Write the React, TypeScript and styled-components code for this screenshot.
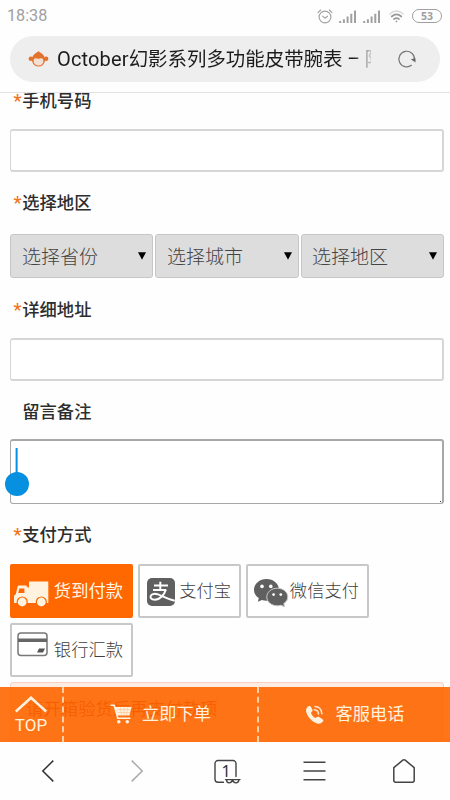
import React from 'react';
import styled, { createGlobalStyle, css } from 'styled-components';

const GlobalStyle = createGlobalStyle`
  * { box-sizing: border-box; }
  body { margin: 0; background: #fefefe; }
  svg { display: block; flex: none; overflow: visible; }
`;

const Screen = styled.div`
  width: 450px;
  height: 800px;
  display: flex;
  flex-direction: column;
  overflow: hidden;
  background: #fefefe;
  color: #333;
  font-family: Roboto, 'Noto Sans CJK SC', sans-serif;
`;

const StatusBar = styled.div`
  height: 36px;
  padding: 0 8px 4px 7px;
  display: flex;
  align-items: center;
  justify-content: space-between;
  color: #a0a0a0;
`;

const Clock = styled.span`
  font-size: 16.2px;
  line-height: 34px;
`;

const StatusIcons = styled.div`
  display: flex;
  align-items: center;
`;

const Address = styled.div`
  height: 46px;
  flex: none;
  margin: 0 10px 10px;
  padding: 0 24px 0 18px;
  border-radius: 23px;
  background: #eee;
  display: flex;
  align-items: center;
`;

const Title = styled.div`
  width: 314px;
  margin-left: 8px;
  margin-right: auto;
  overflow: hidden;
  white-space: nowrap;
  font-size: 19.45px;
  line-height: 48px;
  color: #1c1c1c;
  -webkit-mask-image: linear-gradient(90deg, #000 296px, transparent 318px);
  mask-image: linear-gradient(90deg, #000 296px, transparent 318px);
`;

const Latin = styled.span`
  font-size: 20px;
  letter-spacing: 0.15px;
`;

const Page = styled.main`
  position: relative;
  height: 650px;
  flex: none;
  overflow: hidden;
  border-top: 1px solid #e2e2e2;
`;

const Form = styled.form`
  display: flex;
  flex-direction: column;
  margin: -2px 6px 0 10px;
`;

const Field = styled.div<{ $gap: number; $after?: number }>`
  display: flex;
  flex-direction: column;
  gap: ${(p) => p.$gap}px;
  margin-bottom: ${(p) => p.$after ?? 21}px;
`;

const Label = styled.label`
  height: 20px;
  padding-left: 3.5px;
  display: flex;
  font-size: 17.3px;
  font-weight: 500;
  line-height: 21px;
  color: #2d2d2d;
`;

const Mark = styled.span`
  width: 8.8px;
  font-size: 18px;
  line-height: 20px;
  color: #ee7420;
`;

const Input = styled.input`
  width: 100%;
  height: 43px;
  padding: 0 10px;
  border: 2px solid #d6d6d6;
  border-width: 2px 2px 2px 1px;
  border-radius: 3px;
  background: #fff;
  outline: none;
`;

const NoteBox = styled.div`
  position: relative;
  height: 65px;
`;

const Note = styled.textarea`
  display: block;
  width: 100%;
  height: 65px;
  border: 1px solid #a8a8a8;
  border-width: 2px 2px 1px 1px;
  border-radius: 3px;
  background: #fff;
  resize: none;
  outline: none;
`;

const CaretHandle = styled.svg`
  position: absolute;
  left: -5px;
  top: 9px;
`;

const GripDot = styled.i`
  position: absolute;
  right: 3px;
  bottom: 2px;
  width: 1px;
  height: 1px;
  background: #333;
`;

const SelectRow = styled.div`
  display: grid;
  grid-template-columns: 143px 144px 143px;
  justify-content: space-between;
`;

const Select = styled.button`
  height: 44px;
  padding: 4px 6px 0 11px;
  display: flex;
  align-items: center;
  justify-content: space-between;
  border: 1px solid #c6c6c6;
  border-radius: 3px;
  background: #ddd;
  font: 300 19px/42px Roboto, 'Noto Sans CJK SC', sans-serif;
  color: #444;

  &:nth-child(3) { padding-left: 10px; }

  svg { margin-top: -4px; }
`;

const Payments = styled.div`
  display: flex;
  flex-wrap: wrap;
  gap: 5px;
`;

const payActive = css`
  border-color: #ff6700;
  background: #ff6700;
  color: #fff6e6;
  font-weight: 400;
`;

const PayOption = styled.button<{ $width: number; $active?: boolean }>`
  width: ${(p) => p.$width}px;
  height: 54px;
  padding: 0 8px 1px 0;
  display: flex;
  align-items: center;
  border: 2px solid #c8c8c8;
  border-radius: 2px;
  background: #fff;
  font: 300 17.3px/48px Roboto, 'Noto Sans CJK SC', sans-serif;
  color: #404040;
  white-space: nowrap;
  ${(p) => p.$active && payActive}

  span { margin-left: auto; }
`;

const Notice = styled.div`
  height: 60px;
  margin-top: 5px;
  padding-left: 15px;
  border: 1px solid #f8cfc0;
  border-radius: 3px;
  background: #fdece4;
  font-size: 17.4px;
  line-height: 53px;
  color: #a03010;
`;

const ActionBar = styled.div`
  position: absolute;
  inset: auto 0 0 0;
  height: 55px;
  display: grid;
  grid-template-columns: 62px 195px 193px;
  background: rgba(255, 102, 0, 0.9);
  color: #fff2df;
`;

const Action = styled.button<{ $gap?: number; $stack?: boolean }>`
  padding: 0;
  display: flex;
  flex-direction: ${(p) => (p.$stack ? 'column' : 'row')};
  align-items: center;
  justify-content: center;
  gap: ${(p) => p.$gap ?? 0}px;
  border: 0;
  background: none;
  font: 400 17.2px/20px Roboto, 'Noto Sans CJK SC', sans-serif;
  color: inherit;

  & + & {
    border-left: 2px dashed #ffd0a6;
    padding: 0 0 1px 1px;
  }
`;

const TopText = styled.span`
  font-size: 17px;
  line-height: 18px;
`;

const BrowserNav = styled.nav`
  height: 58px;
  flex: none;
  padding: 0 2px 0 4px;
  display: grid;
  grid-template-columns: repeat(5, 1fr);
  align-items: center;
  justify-items: center;
`;

const line = { fill: 'none', strokeLinecap: 'round', strokeLinejoin: 'round' } as const;

const AlarmIcon = () => (
  <svg width="16" height="15" viewBox="0 0 16 15" stroke="#a0a0a0" strokeWidth="1.1" {...line}>
    <circle cx="8" cy="8" r="5.9" />
    <path d="M5.6 7.1 8 9.2l2.5-2M1 3.6 3.7 1M15 3.6 12.3 1" />
  </svg>
);

const SignalIcon = () => (
  <svg width="18" height="13" viewBox="0 0 18 13" stroke="#a0a0a0" strokeWidth="2" fill="none">
    <path d="M1.2 13v-2M4.9 13V9.2M8.6 13V6.6M12.3 13V3.8M16 13V.5" />
  </svg>
);

const WifiIcon = () => (
  <svg width="15" height="13" viewBox="0 0 15 13" strokeWidth="1.7" stroke="#999" {...line}>
    <path d="M.8 4Q7.5-2 14.2 4" stroke="#d8d8d8" strokeWidth="1.2" />
    <path d="M2.7 6.5Q7.5 2.4 12.3 6.5M4.9 9.1q2.6-2 5.2 0" />
    <circle cx="7.5" cy="11.4" r=".9" fill="#999" stroke="none" />
  </svg>
);

const Battery = styled.span`
  width: 30px;
  height: 14px;
  border: 1px solid #a0a0a0;
  border-radius: 7px;
  font: 700 10.5px/12px 'Open Sans', sans-serif;
  text-align: center;
`;

const Spacer = styled.i<{ $w: number }>`
  width: ${(p) => p.$w}px;
`;

const MonkeyIcon = () => (
  <svg width="21" height="16" viewBox="0 0 21 16" fill="#e2722c">
    <path d="M10.5 0C12 2 15 2.200 16.500 6L17 10C16 13.800 13.800 15.600 10.500 15.600S5 13.800 4 10L4.500 6C6 2.200 9 2 10.500 0Z" />
    <circle cx="2.900" cy="7.800" r="2.300" />
    <circle cx="18.100" cy="7.800" r="2.300" />
    <path
      d="M5.600 9.800c0-1.900 1.300-2.700 2.600-2.500 1 .1 1.600.6 2.300.6s1.300-.5 2.300-.6c1.300-.2 2.600.6 2.600 2.500 0 3-1.900 4.800-4.900 4.800s-4.900-1.800-4.900-4.800Z"
      fill="#f3e0d4"
    />
  </svg>
);

const ReloadIcon = () => (
  <svg width="18" height="18" viewBox="0 0 18 18">
    <path d="M13.400 15.300A7.800 7.800 0 1 1 16.500 9.500" stroke="#777" strokeWidth="1.200" {...line} />
    <path d="m12.800 9.200 4.700-1v4.300Z" fill="#666" />
  </svg>
);

const DownTriangle = () => (
  <svg width="8" height="8" viewBox="0 0 8 8">
    <path d="M0 .2h8L4 7.800Z" fill="#000" />
  </svg>
);

const PayIcon = styled.svg<{ $x: number; $y?: number }>`
  margin-left: ${(p) => p.$x}px;
  margin-top: ${(p) => p.$y ?? 0}px;
`;

const TruckIcon = () => (
  <PayIcon $x={2} $y={6} width="35" height="26" viewBox="0 0 35 26" fill="#fff3e0">
    <path d="M15 .5h19.300V22H13V6.500h2Z" />
    <path d="M5 4.500h6.500c.8 0 1.200.4 1.200 1.200h1V22H0v-7.200l1.800-1.600 1.700-7.300c.2-.8.7-1.400 1.500-1.400Z" />
    <path d="M5.400 7.600h5v4.500H4.200Z" fill="#ff6700" />
    <g stroke="#ff6700" strokeWidth="1.200">
      <circle cx="8.200" cy="21" r="5" />
      <circle cx="27.300" cy="21" r="5" />
    </g>
  </PayIcon>
);

const AlipayIcon = () => (
  <PayIcon $x={7} $y={2} width="28" height="28" viewBox="0 0 28 28">
    <rect width="28" height="28" rx="5" fill="#606060" />
    <g stroke="#fff" fill="none" strokeWidth="2">
      <path d="M7 7.500h14M6 12h13M13.300 3.800V12" />
      <path d="M19 11.500c-1.600 5-6 10.200-11.300 10.200-3.200 0-4.700-1.700-4-3.700.8-2.200 4.200-2.700 7.300-1.600 5 1.700 9.200 4.900 16.800 6.400" />
    </g>
  </PayIcon>
);

const WechatIcon = () => (
  <PayIcon $x={6} $y={4} width="34" height="28" viewBox="0 0 34 28">
    <path
      d="M12.500 0C19.400 0 25 4.800 25 10.900s-5.600 10.900-12.500 10.900c-1.700 0-3.200-.2-4.600-.7L4 22.700l.7-3.600C1.800 17 0 14.200 0 10.900 0 4.800 5.600 0 12.500 0Z"
      fill="#606060"
    />
    <path
      d="M23.300 9.200c-5.900 0-10.500 3.900-10.500 8.800s4.600 8.800 10.500 8.800c1.300 0 2.500-.2 3.600-.6l3.600 1.600-.7-3.300c2.500-1.600 4-3.900 4-6.500 0-4.900-4.600-8.800-10.500-8.800Z"
      fill="#606060"
      stroke="#ccc"
      strokeWidth="1"
    />
    <g fill="#fff">
      <circle cx="8" cy="7.400" r="1.800" />
      <circle cx="16.800" cy="7.400" r="1.800" />
      <circle cx="19.600" cy="15.600" r="1.400" />
      <circle cx="26.800" cy="15.600" r="1.400" />
    </g>
  </PayIcon>
);

const CardIcon = () => (
  <PayIcon $x={5} $y={-10} width="31" height="25" viewBox="0 0 31 25">
    <rect x="1" y="1" width="29" height="22.500" rx="3" fill="none" stroke="#777" strokeWidth="1.500" />
    <path d="M1 6.500h29v3.500H1Z" fill="#666" />
    <path d="M22 16.500h6l-2 4h-6Z" fill="#555" />
  </PayIcon>
);

const ChevronUp = () => (
  <svg width="32" height="16" viewBox="0 0 32 16" fill="none" stroke="#fff2df" strokeWidth="2.500">
    <path d="M.8 15.500 16 1.700l15.200 13.800" />
  </svg>
);

const CartIcon = () => (
  <svg width="21" height="20" viewBox="0 0 21 20">
    <path d="M0 1.200h3.200l3.600 13h12" stroke="#fff2df" strokeWidth="1.600" {...line} />
    <path d="M3.900 2.900H20.600l-2.200 8.600H6.300Z" fill="#fff2df" />
    <path d="M6 5.600h13.500M6.500 8.500h12.200M9.500 3.500l1 7.500M13 3.500v7.500M16.700 3.500l-1 7.500" stroke="#ffb780" strokeWidth=".5" />
    <circle cx="7.800" cy="17.700" r="1.800" fill="#fff2df" />
    <circle cx="16.300" cy="17.700" r="1.800" fill="#fff2df" />
  </svg>
);

const PhoneIcon = () => (
  <svg width="18" height="19" viewBox="0 0 18 19">
    <path
      d="M1.800 1.600C3 .5 4.200.7 5 2l1.300 2.400c.6 1.200.2 2.100-1.200 3-.2 1.800 2.600 5 4.600 5.500 1.300-1.300 2.400-1.500 3.500-.8l3 1.800c1.300.8 1.500 1.900.5 2.900-1.800 2-4.300 2.500-7.300 1C5.500 16 1.500 11.500.3 7.300-.3 4.800.2 3 1.800 1.600Z"
      fill="#fff2df"
    />
    <path d="M8.300 4.700c2.500.1 4 1.600 4.200 4.300M9 1.500c4.200.2 6.500 2.600 6.900 7.200" stroke="#ffe5cb" strokeWidth="1.600" {...line} />
  </svg>
);

const BackIcon = ({ color, flip }: { color: string; flip?: boolean }) => (
  <svg width="12" height="22" viewBox="0 0 12 22" stroke={color} strokeWidth="1.500" fill="none">
    <path d={flip ? 'M.7.600 11.200 11 .7 21.400' : 'M11.300.600.8 11l10.500 10.400'} />
  </svg>
);

const TabsButton = styled.span`
  position: relative;
  width: 23px;
  height: 23px;
  font: 400 16px/23px 'Noto Sans', sans-serif;
  text-align: center;
  color: #333;

  svg { position: absolute; left: 0; top: 0; }
`;

const TabsIcon = () => (
  <svg width="26" height="25" viewBox="0 0 26 25" stroke="#444" strokeWidth="1.400" {...line}>
    <path d="M9.500 22.300H4A3 3 0 0 1 1 19.300V3.500a3 3 0 0 1 3-3h15a3 3 0 0 1 3 3v13" />
    <path d="M11.500 19.600h14.500" />
    <path d="M12.500 20c.1 3.600 4.700 4 6-.2 1.300 4.200 6.200 3.800 6.300.2" />
  </svg>
);

const MenuIcon = () => (
  <svg width="23" height="20" viewBox="0 0 23 20" stroke="#444" strokeWidth="1.500">
    <path d="M.5 1.200h22M.5 10h22M.5 18.800h22" />
  </svg>
);

const HomeIcon = () => (
  <svg width="22" height="24" viewBox="0 0 22 24" stroke="#444" strokeWidth="1.500" {...line}>
    <path d="m.8 8.700 9-7.500q1.200-1 2.400 0l9 7.500v12.500a2 2 0 0 1-2 2H2.800a2 2 0 0 1-2-2Z" />
  </svg>
);

const regions = ['选择省份', '选择城市', '选择地区'];

const payments = [
  { name: '货到付款', width: 123, icon: <TruckIcon />, active: true },
  { name: '支付宝', width: 103, icon: <AlipayIcon /> },
  { name: '微信支付', width: 123, icon: <WechatIcon /> },
  { name: '银行汇款', width: 123, icon: <CardIcon /> },
];

const FieldLabel = ({ text, required = true }: { text: string; required?: boolean }) => (
  <Label>
    <Mark>{required ? '*' : ''}</Mark>
    {text}
  </Label>
);

export default function App() {
  return (
    <>
      <GlobalStyle />
      <Screen>
        <StatusBar>
          <Clock>18:38</Clock>
          <StatusIcons>
            <AlarmIcon />
            <Spacer $w={6} />
            <SignalIcon />
            <Spacer $w={6} />
            <SignalIcon />
            <Spacer $w={8} />
            <WifiIcon />
            <Spacer $w={8} />
            <Battery>53</Battery>
          </StatusIcons>
        </StatusBar>
        <Address>
          <MonkeyIcon />
          <Title>
            <Latin>October</Latin>幻影系列多功能皮带腕表 – 陌
          </Title>
          <ReloadIcon />
        </Address>
        <Page>
          <Form>
            <Field $gap={18}>
              <FieldLabel text="手机号码" />
              <Input />
            </Field>
            <Field $gap={21} $after={22}>
              <FieldLabel text="选择地区" />
              <SelectRow>
                {regions.map((name) => (
                  <Select key={name} type="button">
                    {name}
                    <DownTriangle />
                  </Select>
                ))}
              </SelectRow>
            </Field>
            <Field $gap={18}>
              <FieldLabel text="详细地址" />
              <Input />
            </Field>
            <Field $gap={17}>
              <FieldLabel text="留言备注" required={false} />
              <NoteBox>
                <Note />
                <GripDot />
                <CaretHandle width="24" height="48" viewBox="0 0 24 48" fill="#0790df">
                  <path d="M10.600 0h2v26h-2Z" />
                  <circle cx="12" cy="36" r="12" />
                </CaretHandle>
              </NoteBox>
            </Field>
            <Field $gap={19} $after={0}>
              <FieldLabel text="支付方式" />
              <Payments>
                {payments.map((p) => (
                  <PayOption key={p.name} type="button" $width={p.width} $active={p.active}>
                    {p.icon}
                    <span>{p.name}</span>
                  </PayOption>
                ))}
              </Payments>
            </Field>
            <Notice>请开箱验货后再支付款项</Notice>
          </Form>
          <ActionBar>
            <Action $gap={4} $stack>
              <ChevronUp />
              <TopText>TOP</TopText>
            </Action>
            <Action $gap={10}>
              <CartIcon />
              立即下单
            </Action>
            <Action $gap={12}>
              <PhoneIcon />
              客服电话
            </Action>
          </ActionBar>
        </Page>
        <BrowserNav>
          <BackIcon color="#333" />
          <BackIcon color="#aaa" flip />
          <TabsButton>
            1
            <TabsIcon />
          </TabsButton>
          <MenuIcon />
          <HomeIcon />
        </BrowserNav>
      </Screen>
    </>
  );
}
